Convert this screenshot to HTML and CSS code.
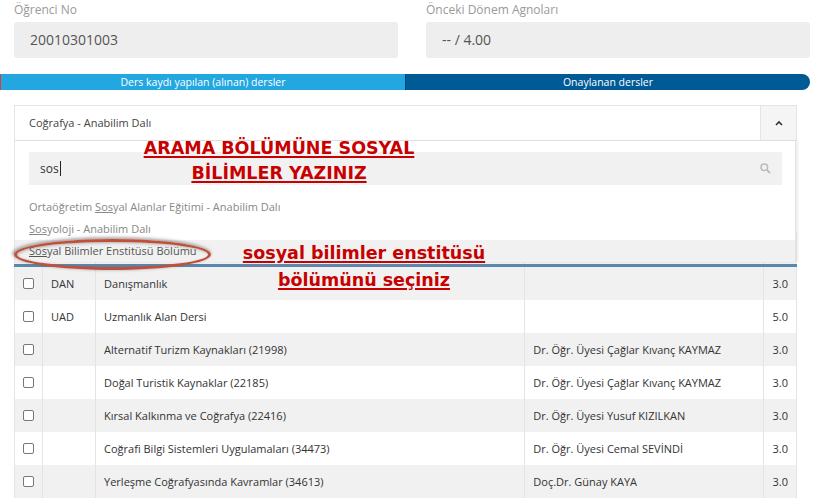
FILE: index.html
```html
<!DOCTYPE html>
<html lang="tr">
<head>
  <meta charset="UTF-8">
  <title>Ders Kaydı</title>
  <link rel="stylesheet" href="styles.css">
</head>
<body>
  <div class="fields">
    <div class="field">
      <label>Öğrenci No</label>
      <div class="value">20010301003</div>
    </div>
    <div class="field">
      <label>Önceki Dönem Agnoları</label>
      <div class="value">-- / 4.00</div>
    </div>
  </div>

  <div class="progress">
    <div class="step taken">Ders kaydı yapılan (alınan) dersler</div>
    <div class="step approved">Onaylanan dersler</div>
  </div>

  <div class="picker">
    <div class="picker-head">
      <span class="picker-text">Coğrafya - Anabilim Dalı</span>
      <span class="picker-btn">
        <svg width="8" height="6" viewBox="0 0 8 6"><polyline points="1,5 4,2 7,5" fill="none" stroke="#333" stroke-width="1.6"/></svg>
      </span>
    </div>
    <div class="picker-drop">
      <div class="search">
        <span class="search-text">sos</span>
        <svg class="search-icon" width="11" height="11" viewBox="0 0 11 11"><circle cx="4.3" cy="4.3" r="3.3" fill="none" stroke="#bbb" stroke-width="1.5"/><line x1="6.8" y1="6.8" x2="10" y2="10" stroke="#bbb" stroke-width="1.8"/></svg>
      </div>
      <ul class="options">
        <li>Ortaöğretim <u>Sos</u>yal Alanlar Eğitimi - Anabilim Dalı</li>
        <li><u>Sos</u>yoloji - Anabilim Dalı</li>
        <li class="active"><u>Sos</u>yal Bilimler Enstitüsü Bölümü</li>
      </ul>
    </div>
  </div>

  <table class="courses">
    <thead>
      <tr><th></th><th>Kod</th><th>Ders Adı</th><th>Öğretim Üyesi</th><th>Kr</th></tr>
    </thead>
    <tbody>
      <tr><td><span class="check"></span></td><td>DAN</td><td>Danışmanlık</td><td></td><td>3.0</td></tr>
      <tr><td><span class="check"></span></td><td>UAD</td><td>Uzmanlık Alan Dersi</td><td></td><td>5.0</td></tr>
      <tr><td><span class="check"></span></td><td></td><td>Alternatif Turizm Kaynakları (21998)</td><td>Dr. Öğr. Üyesi Çağlar Kıvanç KAYMAZ</td><td>3.0</td></tr>
      <tr><td><span class="check"></span></td><td></td><td>Doğal Turistik Kaynaklar (22185)</td><td>Dr. Öğr. Üyesi Çağlar Kıvanç KAYMAZ</td><td>3.0</td></tr>
      <tr><td><span class="check"></span></td><td></td><td>Kırsal Kalkınma ve Coğrafya (22416)</td><td>Dr. Öğr. Üyesi Yusuf KIZILKAN</td><td>3.0</td></tr>
      <tr><td><span class="check"></span></td><td></td><td>Coğrafi Bilgi Sistemleri Uygulamaları (34473)</td><td>Dr. Öğr. Üyesi Cemal SEVİNDİ</td><td>3.0</td></tr>
      <tr><td><span class="check"></span></td><td></td><td>Yerleşme Coğrafyasında Kavramlar (34613)</td><td>Doç.Dr. Günay KAYA</td><td>3.0</td></tr>
    </tbody>
  </table>

  <!-- annotations drawn over the screenshot -->
  <div class="note note-search">ARAMA BÖLÜMÜNE SOSYAL<br>BİLİMLER YAZINIZ</div>
  <div class="note note-pick">sosyal bilimler enstitüsü<br>bölümünü seçiniz</div>
  <div class="ring"></div>
</body>
</html>
```

FILE: styles.css
```css
body {
  margin: 0;
  background: #fff;
  color: #333;
  font-family: "Open Sans", "Noto Sans", sans-serif;
  position: relative;
  overflow: hidden;
}

.fields {
  display: flex;
  gap: 28px;
  padding: 2px 5px 0 14px;
}

.field {
  width: 384px;
}

.field label {
  display: block;
  font-size: 12px;
  line-height: 16px;
  color: #999;
}

.field .value {
  margin-top: 4px;
  height: 36px;
  line-height: 36px;
  padding-left: 16px;
  background: #eee;
  border-radius: 3px;
  font-size: 14px;
  color: #555;
}

.progress {
  display: flex;
  margin: 16px 5px 0 0;
  height: 16px;
}

.step {
  flex: 1;
  color: #fff;
  font-size: 10.5px;
  line-height: 16px;
  text-align: center;
}

.step.taken {
  background: #22a7e0;
  border-left: 1px solid #e0393e;
}

.step.approved {
  background: #005a96;
  border-left: 1px solid #0b4470;
  border-radius: 0 8px 8px 0;
}

.picker {
  position: relative;
  margin: 15px 18px 0 14px;
  font-size: 11px;
}

.picker-head {
  display: flex;
  height: 34px;
  border: 1px solid #e4e4e4;
}

.picker-text {
  flex: 1;
  padding-left: 14px;
  line-height: 34px;
  color: #444;
}

.picker-btn {
  width: 35px;
  display: flex;
  align-items: center;
  justify-content: center;
  background: #f5f5f5;
  border-left: 1px solid #e4e4e4;
}

.picker-drop {
  position: absolute;
  top: 100%;
  left: 0;
  right: 1px;
  z-index: 2;
  background: #fff;
  border: 1px solid #e4e4e4;
  border-top: none;
  border-bottom: none;
  box-shadow: 2px 0 2px rgba(0, 0, 0, 0.08);
  padding-top: 11px;
}

.search {
  display: flex;
  align-items: center;
  justify-content: space-between;
  height: 33px;
  margin: 0 13px 0 14px;
  padding: 0 11px 0 11px;
  background: #f1f1f1;
  font-size: 12px;
}

.search-text {
  border-right: 1px solid #222;
  padding-right: 1px;
  line-height: 15px;
  color: #333;
}

.options {
  list-style: none;
  margin: 11px 0 0;
  padding: 0;
}

.options li {
  height: 22px;
  line-height: 22px;
  padding-left: 14px;
  color: #888;
}

.options li.active {
  background: #f1f1f1;
  color: #555;
}

.courses {
  width: 783px;
  margin: 92px 18px 0 14px;
  border-collapse: collapse;
  font-size: 11px;
  table-layout: fixed;
}

.courses th {
  height: 31px;
  padding: 0;
  background: #f1f1f1;
  border-bottom: 3px solid #5a87ab;
  border-left: 1px solid #e2e2e2;
  text-align: left;
  font-weight: normal;
}

.courses th:nth-child(1) { width: 27px; }
.courses th:nth-child(2) { width: 52px; }
.courses th:nth-child(3) { width: 428px; }
.courses th:nth-child(4) { width: 238px; }
.courses th:nth-child(5) { width: 32px; }

.courses td {
  height: 33px;
  padding: 0 0 0 8px;
  border-left: 1px solid #e4e4e4;
  color: #333;
  white-space: nowrap;
}

.courses td:last-child {
  border-right: 1px solid #e4e4e4;
}

.courses tbody tr:nth-child(odd) {
  background: #f1f1f1;
}

.check {
  display: block;
  width: 9px;
  height: 9px;
  border: 1px solid #777;
  border-radius: 2px;
  background: #fff;
}

.note {
  position: absolute;
  z-index: 5;
  font-family: "DejaVu Sans", Verdana, sans-serif;
  font-weight: bold;
  font-size: 17.5px;
  line-height: 25px;
  color: #c80000;
  text-decoration: underline;
  text-decoration-thickness: 2px;
  text-underline-offset: 2px;
  text-align: center;
  white-space: nowrap;
}

.note-search {
  left: 129px;
  top: 136px;
  width: 300px;
}

.note-pick {
  left: 214px;
  top: 240px;
  width: 300px;
  line-height: 27px;
}

.ring {
  position: absolute;
  z-index: 4;
  left: 14px;
  top: 239px;
  width: 191px;
  height: 25px;
  border: 3px solid #c0503a;
  border-radius: 50%;
  box-shadow: -1px -1px 3px 1px rgba(90, 90, 90, 0.5), inset 1px 1px 3px rgba(90, 90, 90, 0.4);
}
```
